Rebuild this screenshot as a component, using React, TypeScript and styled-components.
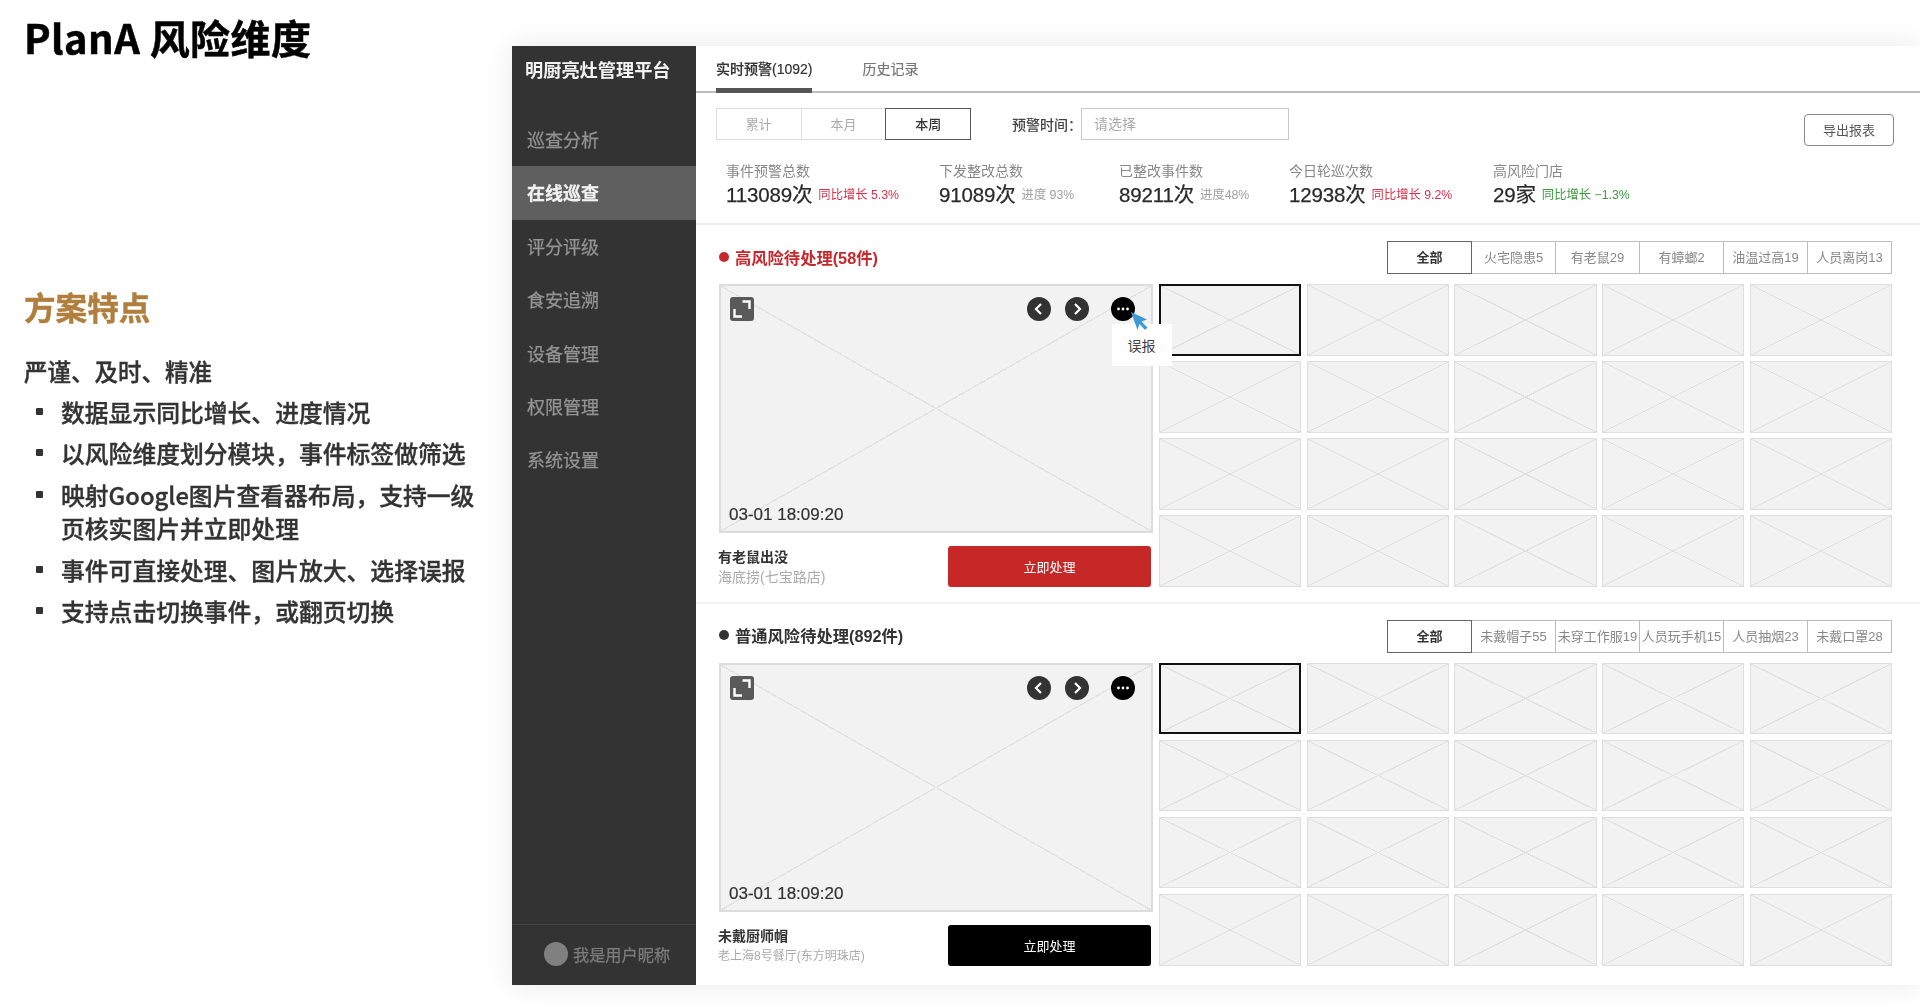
import styled, { createGlobalStyle } from "styled-components";

const GlobalStyle = createGlobalStyle`
  html, body {
    margin: 0;
    padding: 0;
    background: #fff;
  }
  * {
    box-sizing: border-box;
  }
`;

const NAV_ITEMS = ["巡查分析", "在线巡查", "评分评级", "食安追溯", "设备管理", "权限管理", "系统设置"];

const POINTS = [
  "数据显示同比增长、进度情况",
  "以风险维度划分模块，事件标签做筛选",
  "映射Google图片查看器布局，支持一级页核实图片并立即处理",
  "事件可直接处理、图片放大、选择误报",
  "支持点击切换事件，或翻页切换",
];

const STATS = [
  { label: "事件预警总数", value: "113089次", note: "同比增长 5.3%", tone: "#d9304a", width: 213 },
  { label: "下发整改总数", value: "91089次", note: "进度 93%", tone: "#a0a0a0", width: 180 },
  { label: "已整改事件数", value: "89211次", note: "进度48%", tone: "#a0a0a0", width: 170 },
  { label: "今日轮巡次数", value: "12938次", note: "同比增长 9.2%", tone: "#d9304a", width: 204 },
  { label: "高风险门店", value: "29家", note: "同比增长 −1.3%", tone: "#3f9a3f", width: 200 },
];

const ExpandIcon = () => (
  <svg width="24" height="24" viewBox="0 0 24 24">
    <rect width="24" height="24" rx="3" fill="#595959" />
    <path d="M12.500 4.500h7v7.500M4.500 12v7.500H12" fill="none" stroke="#fff" strokeWidth="2.400" />
  </svg>
);

const RoundIcon = ({ fill, children }: { fill: string; children: React.ReactNode }) => (
  <svg width="24" height="24" viewBox="0 0 24 24">
    <circle cx="12" cy="12" r="12" fill={fill} />
    {children}
  </svg>
);

const Chevron = styled.path`
  fill: none;
  stroke: #fff;
  stroke-width: 2.2;
`;

const Cursor = () => (
  <svg width="18" height="19" viewBox="0 0 18 19">
    <path d="M0 0l16 7.500-5.500 2 6 6-2.500 2.500-5.500-6-2 6z" fill="#3f9bd6" />
  </svg>
);

const Viewer = ({
  title,
  place,
  smallPlace,
  tone,
  showTip,
}: {
  title: string;
  place: string;
  smallPlace?: boolean;
  tone: string;
  showTip?: boolean;
}) => (
  <ViewerColumn>
    <ViewerImage>
      <ControlRow>
        <ExpandIcon />
        <PagerGroup>
          <RoundIcon fill="#333">
            <Chevron d="M14 7l-5 5 5 5" />
          </RoundIcon>
          <RoundIcon fill="#333">
            <Chevron d="M10 7l5 5-5 5" />
          </RoundIcon>
          <MoreWrap>
            <RoundIcon fill="#000">
              <circle cx="7.500" cy="12" r="1.400" fill="#fff" />
              <circle cx="12" cy="12" r="1.400" fill="#fff" />
              <circle cx="16.500" cy="12" r="1.400" fill="#fff" />
            </RoundIcon>
            {showTip && (
              <>
                <TipBox>误报</TipBox>
                <CursorWrap>
                  <Cursor />
                </CursorWrap>
              </>
            )}
          </MoreWrap>
        </PagerGroup>
      </ControlRow>
      <Stamp>03-01 18:09:20</Stamp>
    </ViewerImage>
    <ViewerFooter>
      <div>
        <EventTitle>{title}</EventTitle>
        <EventPlace $small={smallPlace}>{place}</EventPlace>
      </div>
      <ActionButton $bg={tone}>立即处理</ActionButton>
    </ViewerFooter>
  </ViewerColumn>
);

const RiskSection = ({
  heading,
  tone,
  buttonTone,
  filters,
  title,
  place,
  smallPlace,
  showTip,
}: {
  heading: string;
  tone: string;
  buttonTone: string;
  filters: string[];
  title: string;
  place: string;
  smallPlace?: boolean;
  showTip?: boolean;
}) => (
  <SectionBox>
    <SectionHead>
      <SectionTitle $color={tone}>
        <Dot $color={tone} />
        {heading}
      </SectionTitle>
      <FilterBar>
        <FilterTab $active>全部</FilterTab>
        {filters.map((f) => (
          <FilterTab key={f}>{f}</FilterTab>
        ))}
      </FilterBar>
    </SectionHead>
    <SectionBody>
      <Viewer title={title} place={place} smallPlace={smallPlace} tone={buttonTone} showTip={showTip} />
      <ThumbGrid>
        {Array.from({ length: 20 }).map((_, i) => (
          <Thumb key={i} $selected={i === 0} />
        ))}
      </ThumbGrid>
    </SectionBody>
  </SectionBox>
);

const App = () => (
  <Page>
    <GlobalStyle />
    <Notes>
      <PageTitle>PlanA 风险维度</PageTitle>
      <NotesTitle>方案特点</NotesTitle>
      <NotesLead>严谨、及时、精准</NotesLead>
      <PointList>
        {POINTS.map((p) => (
          <li key={p}>{p}</li>
        ))}
      </PointList>
    </Notes>

    <Mock>
      <Sidebar>
        <Brand>明厨亮灶管理平台</Brand>
        <nav>
          {NAV_ITEMS.map((item) => (
            <NavItem key={item} $active={item === "在线巡查"}>
              {item}
            </NavItem>
          ))}
        </nav>
        <UserBar>
          <Avatar />
          我是用户昵称
        </UserBar>
      </Sidebar>

      <Content>
        <TabBar>
          <Tab $active>实时预警(1092)</Tab>
          <Tab>历史记录</Tab>
        </TabBar>
        <Toolbar>
          <Segment>累计</Segment>
          <Segment>本月</Segment>
          <Segment $active>本周</Segment>
          <FieldLabel>预警时间：</FieldLabel>
          <FieldInput>请选择</FieldInput>
          <ExportButton>导出报表</ExportButton>
        </Toolbar>
        <StatRow>
          {STATS.map((s) => (
            <Stat key={s.label} $width={s.width}>
              <StatLabel>{s.label}</StatLabel>
              <StatLine>
                <StatValue>{s.value}</StatValue>
                <StatNote $color={s.tone}>{s.note}</StatNote>
              </StatLine>
            </Stat>
          ))}
        </StatRow>
        <RiskSection
          heading="高风险待处理(58件)"
          tone="#c8282d"
          buttonTone="#c62828"
          filters={["火宅隐患5", "有老鼠29", "有蟑螂2", "油温过高19", "人员离岗13"]}
          title="有老鼠出没"
          place="海底捞(七宝路店)"
          showTip
        />
        <RiskSection
          heading="普通风险待处理(892件)"
          tone="#333"
          buttonTone="#000"
          filters={["未戴帽子55", "未穿工作服19", "人员玩手机15", "人员抽烟23", "未戴口罩28"]}
          title="未戴厨师帽"
          place="老上海8号餐厅(东方明珠店)"
          smallPlace
        />
      </Content>
    </Mock>
  </Page>
);

export default App;

// 页面
const Page = styled.div`
  width: 1920px;
  height: 1003px;
  display: flex;
  overflow: hidden;
  background: #fff;
  font-family: "Noto Sans CJK SC", sans-serif;
`;

// 左侧说明
const Notes = styled.div`
  width: 512px;
  flex: none;
  padding: 11px 0 0 24px;
  filter: blur(0.3px);
`;

const PageTitle = styled.h1`
  margin: 0;
  font-size: 40px;
  line-height: 52px;
  letter-spacing: 0.4px;
  font-weight: 700;
  color: #000;
  -webkit-text-stroke: 0.5px #000;
`;

const NotesTitle = styled.h2`
  margin: 217px 0 0;
  font-size: 31.600px;
  line-height: 52px;
  font-weight: 700;
  color: #b07f3e;
  -webkit-text-stroke: 0.4px #b07f3e;
`;

const NotesLead = styled.div`
  margin-top: 22px;
  font-size: 23.500px;
  line-height: 34px;
  font-weight: 500;
  color: #333;
  -webkit-text-stroke: 0.35px #333;
`;

const PointList = styled.ul`
  margin: 7px 0 0;
  padding: 0 0 0 37px;
  width: 460px;
  font-size: 23.800px;
  line-height: 33.600px;
  font-weight: 500;
  color: #333;
  -webkit-text-stroke: 0.35px #333;
  list-style: none;

  li {
    position: relative;
    margin-bottom: 7.800px;
  }

  li::before {
    content: "";
    position: absolute;
    left: -25px;
    top: 13px;
    width: 7px;
    height: 7px;
    border-radius: 1px;
    background: #333;
  }
`;

// 右侧原型
const Mock = styled.div`
  width: 1408px;
  height: 939px;
  margin-top: 46px;
  flex: none;
  display: flex;
  background: #fff;
  box-shadow: 0 0 28px rgba(0, 0, 0, 0.09);
  filter: blur(0.5px);
`;

const Sidebar = styled.aside`
  width: 184px;
  flex: none;
  display: flex;
  flex-direction: column;
  background: #333;
`;

const Brand = styled.div`
  height: 46px;
  margin-bottom: 21px;
  padding-left: 13px;
  font-size: 18.200px;
  line-height: 46px;
  font-weight: 700;
  color: #f2f2f2;
  white-space: nowrap;
`;

const NavItem = styled.div<{ $active?: boolean }>`
  height: 53.400px;
  padding-left: 15px;
  font-size: 18px;
  line-height: 53.400px;
  font-weight: ${(p) => (p.$active ? 700 : 400)};
  color: ${(p) => (p.$active ? "#f2f2f2" : "#949494")};
  background: ${(p) => (p.$active ? "#5f5f5f" : "transparent")};
  -webkit-text-stroke: 0.25px ${(p) => (p.$active ? "#f2f2f2" : "#949494")};
`;

const UserBar = styled.div`
  margin-top: auto;
  height: 61px;
  padding: 0 0 3px 32px;
  display: flex;
  align-items: center;
  gap: 5px;
  border-top: 1px solid #444;
  font-size: 16.200px;
  color: #7c7c7c;
  -webkit-text-stroke: 0.25px #7c7c7c;
`;

const Avatar = styled.span`
  width: 24px;
  height: 24px;
  border-radius: 50%;
  background: #808080;
`;

const Content = styled.main`
  flex: 1;
  min-width: 0;
`;

const TabBar = styled.div`
  height: 47px;
  padding-left: 20px;
  display: flex;
  gap: 50px;
  border-bottom: 2px solid #bdbdbd;
`;

const Tab = styled.div<{ $active?: boolean }>`
  height: 47px;
  padding-top: 12px;
  font-family: "Liberation Sans", "Noto Sans CJK SC", sans-serif;
  font-size: 14px;
  line-height: 22px;
  font-weight: ${(p) => (p.$active ? 500 : 400)};
  color: ${(p) => (p.$active ? "#333" : "#777")};
  border-bottom: ${(p) => (p.$active ? "5px solid #555" : "none")};
  -webkit-text-stroke: 0.2px ${(p) => (p.$active ? "#333" : "#777")};
`;

const Toolbar = styled.div`
  padding: 15px 26px 0 20px;
  display: flex;
  align-items: flex-start;
`;

const Segment = styled.div<{ $active?: boolean }>`
  width: 85.700px;
  height: 32px;
  margin-right: -1px;
  position: relative;
  z-index: ${(p) => (p.$active ? 1 : 0)};
  border: 1.500px solid ${(p) => (p.$active ? "#555" : "#ddd")};
  font-size: 13px;
  line-height: 29px;
  text-align: center;
  font-weight: ${(p) => (p.$active ? 500 : 400)};
  color: ${(p) => (p.$active ? "#333" : "#aaa")};
`;

const FieldLabel = styled.div`
  margin-left: 42px;
  width: 69px;
  font-size: 14px;
  line-height: 32px;
  font-weight: 500;
  color: #444;
  white-space: nowrap;
`;

const FieldInput = styled.div`
  width: 208px;
  height: 32px;
  padding-left: 12px;
  border: 1.500px solid #c8c8c8;
  font-size: 14px;
  line-height: 29px;
  color: #aaa;
`;

const ExportButton = styled.div`
  margin: 6px 0 0 auto;
  width: 90px;
  height: 32px;
  border: 1px solid #888;
  border-radius: 4px;
  font-size: 13px;
  line-height: 30px;
  text-align: center;
  color: #555;
`;

const StatRow = styled.div`
  height: 78.500px;
  padding: 13.700px 0 0 30px;
  display: flex;
  border-bottom: 2px solid #efefef;
`;

const Stat = styled.div<{ $width: number }>`
  width: ${(p) => p.$width}px;
  flex: none;
`;

const StatLabel = styled.div`
  font-size: 14px;
  line-height: 20px;
  color: #888;
`;

const StatLine = styled.div`
  margin-top: 1px;
  display: flex;
  align-items: center;
  gap: 6px;
  font-family: "Liberation Sans", "Noto Sans CJK SC", sans-serif;
  line-height: 28px;
`;

const StatValue = styled.span`
  font-size: 20.500px;
  letter-spacing: -0.15px;
  color: #2a2a2a;
  -webkit-text-stroke: 0.25px #2a2a2a;
`;

const StatNote = styled.span<{ $color: string }>`
  font-size: 12.300px;
  color: ${(p) => p.$color};
`;

// 风险模块
const SectionBox = styled.section`
  padding: 16.500px 28px 15px 23px;
  border-bottom: 2px solid #f2f2f2;

  &:last-child {
    border-bottom: none;
    padding-top: 15.500px;
    padding-bottom: 0;
  }
`;

const SectionHead = styled.div`
  display: flex;
  align-items: center;
  justify-content: space-between;
  height: 33px;
`;

const SectionTitle = styled.div<{ $color: string }>`
  margin-top: -2px;
  display: flex;
  align-items: center;
  gap: 6px;
  font-family: "Liberation Sans", "Noto Sans CJK SC", sans-serif;
  font-size: 16.300px;
  font-weight: 700;
  color: ${(p) => p.$color};
`;

const Dot = styled.span<{ $color: string }>`
  width: 10px;
  height: 10px;
  border-radius: 50%;
  background: ${(p) => p.$color};
`;

const FilterBar = styled.div`
  display: flex;
`;

const FilterTab = styled.div<{ $active?: boolean }>`
  width: 85px;
  height: 33px;
  margin-left: -1px;
  position: relative;
  z-index: ${(p) => (p.$active ? 1 : 0)};
  border: 1px solid ${(p) => (p.$active ? "#666" : "#bdbdbd")};
  font-family: "Liberation Sans", "Noto Sans CJK SC", sans-serif;
  font-size: 13px;
  line-height: 31px;
  text-align: center;
  white-space: nowrap;
  font-weight: ${(p) => (p.$active ? 700 : 400)};
  color: ${(p) => (p.$active ? "#333" : "#888")};
`;

const SectionBody = styled.div`
  margin-top: 10px;
  display: flex;
  gap: 6.500px;
`;

const ViewerColumn = styled.div`
  width: 433.500px;
  flex: none;
`;

// 占位图的对角线
const crossLines = `
  linear-gradient(to top right, transparent calc(50% - 0.6px), #e0e0e0 calc(50% - 0.6px), #e0e0e0 calc(50% + 0.6px), transparent calc(50% + 0.6px)),
  linear-gradient(to bottom right, transparent calc(50% - 0.6px), #e0e0e0 calc(50% - 0.6px), #e0e0e0 calc(50% + 0.6px), transparent calc(50% + 0.6px))
`;

const ViewerImage = styled.div`
  height: 249px;
  padding: 11px 16px 5px 8px;
  display: flex;
  flex-direction: column;
  justify-content: space-between;
  border: 2px solid #dcdcdc;
  background-color: #f2f2f2;
  background-image: ${crossLines};
`;

const ControlRow = styled.div`
  display: flex;
  justify-content: space-between;
  align-items: center;
  padding-left: 1px;
`;

const PagerGroup = styled.div`
  display: flex;
  align-items: center;
  gap: 14px;
`;

const MoreWrap = styled.div`
  position: relative;
  height: 24px;
  margin-left: 8px;
`;

const TipBox = styled.div`
  position: absolute;
  left: 1px;
  top: 27px;
  width: 60px;
  height: 42px;
  background: #fff;
  font-size: 14px;
  line-height: 42px;
  text-align: center;
  color: #444;
`;

const CursorWrap = styled.div`
  position: absolute;
  left: 20px;
  top: 15px;
  line-height: 0;
`;

const Stamp = styled.div`
  font-family: "Liberation Sans", sans-serif;
  font-size: 17px;
  line-height: 22px;
  color: #333;
  -webkit-text-stroke: 0.2px #333;
`;

const ViewerFooter = styled.div`
  margin: 13px 0 0 -1px;
  padding-right: 1.500px;
  display: flex;
  justify-content: space-between;
`;

const EventTitle = styled.div`
  font-size: 14px;
  line-height: 20px;
  font-weight: 700;
  color: #333;
`;

const EventPlace = styled.div<{ $small?: boolean }>`
  margin-top: 1px;
  font-family: "Liberation Sans", "Noto Sans CJK SC", sans-serif;
  font-size: ${(p) => (p.$small ? "12px" : "14px")};
  line-height: 20px;
  color: #aaa;
`;

const ActionButton = styled.div<{ $bg: string }>`
  width: 203px;
  height: 41px;
  border-radius: 3px;
  background: ${(p) => p.$bg};
  font-size: 13px;
  line-height: 41px;
  text-align: center;
  color: #fff;
`;

const ThumbGrid = styled.div`
  flex: 1;
  min-width: 0;
  height: 303px;
  display: grid;
  grid-template-columns: repeat(5, 1fr);
  grid-template-rows: repeat(4, 1fr);
  gap: 5.500px;
`;

const Thumb = styled.div<{ $selected?: boolean }>`
  border: ${(p) => (p.$selected ? "2px solid #111" : "1.500px solid #dedede")};
  background-color: #f2f2f2;
  background-image: ${crossLines};
`;
